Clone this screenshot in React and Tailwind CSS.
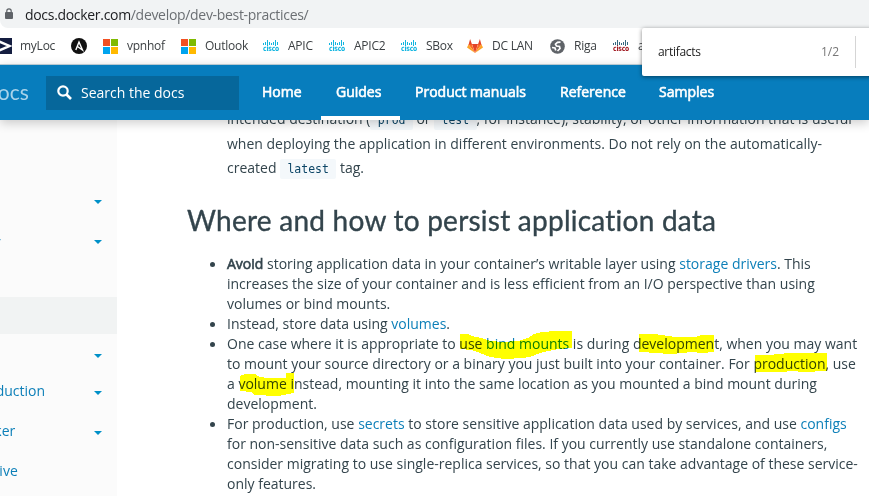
const Tile = () => (
  <svg className="h-[15px] w-[15px] shrink-0" viewBox="0 0 15 15" shapeRendering="crispEdges">
    <path fill="#f25022" d="M0 0h7v7H0z" />
    <path fill="#7fba00" d="M8 0h7v7H8z" />
    <path fill="#00a4ef" d="M0 8h7v7H0z" />
    <path fill="#ffb900" d="M8 8h7v7H8z" />
  </svg>
);

const Cisco = ({ bars = "#10b5e0", word = "#10b5e0" }) => (
  <svg className="h-4 w-4 shrink-0" viewBox="0 0 16 16">
    <path
      stroke={bars}
      strokeWidth="1"
      d="M.5 5v2M2.500 4v3M4.500 2v6M6.500 4v3M8.500 5v2M10.500 4v3M12.500 2v6M14.500 4v3"
    />
    <text x="0" y="13" textLength="16" lengthAdjust="spacingAndGlyphs" fontSize="7.5" fontWeight="700" fontFamily="DejaVu Sans, sans-serif" fill={word}>
      cisco
    </text>
  </svg>
);

const Gitlab = () => (
  <svg className="h-4 w-4 shrink-0" viewBox="0 0 16 16">
    <path fill="#e24329" d="M8 15 5 6h6zM1.500 7 3.100 1 5.200 7zM14.500 7 12.900 1 10.800 7z" />
    <path fill="#fc6d26" d="M8 15 5 6.500H1.500zM8 15l3-8.500h3.500z" />
    <path fill="#fca326" d="M8 15 1.500 6.500 0 9.500zM8 15l6.500-8.500L16 9.500z" />
  </svg>
);

const Globe = () => (
  <svg className="h-[15px] w-[15px] shrink-0" viewBox="0 0 15 15">
    <circle cx="7.500" cy="7.500" r="7.300" fill="#5f6368" />
    <path
      d="M10.500 3.200 7.500 3.400 5.500 5.200 6.500 7l3 .5.5 2-2.500 2.500M2 8.500l3 .5.8 2.500"
      fill="none"
      stroke="#fff"
      strokeWidth="1.700"
    />
  </svg>
);

const Caret = ({ className = "" }) => (
  <svg className={`h-1 w-2 shrink-0 ${className}`} viewBox="0 0 8 4">
    <path fill="#0090c8" d="M0 0h8L4 4z" />
  </svg>
);

const Label = ({ className = "", children }) => (
  <span className={`shrink-0 whitespace-nowrap ${className}`}>{children}</span>
);

const Line = ({ children }) => <span className="block whitespace-nowrap">{children}</span>;

const Item = ({ children }) => (
  <li className="relative before:absolute before:-left-[17px] before:top-[8px] before:h-[5px] before:w-[5px] before:rounded-full before:bg-[#33444c]">
    {children}
  </li>
);

const A = ({ children }) => <a className="text-[#0c7fb8]">{children}</a>;

const Code = ({ children }) => (
  <code className="rounded-[2px] bg-[#f4f8fb] px-[7.300px] py-[3px] font-['DejaVu_Sans_Mono',monospace] text-[11.500px] text-[#0b4566]">
    {children}
  </code>
);

function FindBar() {
  return (
    <div className="absolute left-[642px] top-[28px] flex h-12 w-[240px] items-center rounded-[2px] bg-white pl-4 text-[12px] shadow-[0_1px_4px_rgba(0,0,0,0.5)]">
      <Label className="w-[163px] tracking-[-0.3px] text-[#222]">artifacts</Label>
      <Label className="w-[34px] text-[#777]">1/2</Label>
      <div className="h-8 w-px bg-[#d5d5d5]" />
    </div>
  );
}

function Highlights() {
  return (
    <svg className="pointer-events-none absolute left-0 top-0 h-[496px] w-[869px] mix-blend-multiply" viewBox="0 0 869 496" shapeRendering="crispEdges">
      <g fill="#ff0">
        <path d="M460 334h8l4 2 9 2 10 3 12 1 15-1 10-3 6-4 8-2 14-1h16v17l-14 1-10 2-8 2-7 3-10 2-18 1-15-2-10-4-8-3-12-1z" />
        <path d="M639 334h16l20 3h20l6-2h13v17l-12 1-10-1-20 2-18-1-10-1h-5z" />
        <path d="M755 355h14l20-2h38v18l-24 1-10-1-12 1h-26z" />
        <path d="M240 376l5-2h10l5 3 8 1h18v-5h8v20l-16 3-24-1-3-3-11-1z" />
      </g>
    </svg>
  );
}

export default function App() {
  return (
    <div className="relative flex h-[496px] w-[869px] flex-col overflow-hidden bg-white font-['Open_Sans',sans-serif]">
      <div className="flex h-7 shrink-0 items-center rounded-bl-lg bg-[#f1f3f4] pl-[5px]">
        <svg className="h-3 w-2" viewBox="0 0 8 12">
          <rect y="4" width="8" height="7" rx="1" fill="#5f6368" />
          <path d="M1.800 5V3a2.200 2.200 0 0 1 4.400 0v2" fill="none" stroke="#5f6368" strokeWidth="1.200" />
        </svg>
        <Label className="ml-3 text-[14px] tracking-[-0.310px] text-[#6b6f73]">
          <span className="text-[#202124]">docs.docker.com</span>/develop/dev-best-practices/
        </Label>
      </div>

      <div className="flex h-9 shrink-0 items-center text-[12px] tracking-[-0.250px] text-[#3c4043]">
        <svg className="h-4 w-3 shrink-0" viewBox="0 0 12 16">
          <path fill="#141d40" d="M0 0h12v16H0z" />
          <path d="M-1 3.500 9.500 8-1 12.500" fill="none" stroke="#fff" strokeWidth="2.400" />
        </svg>
        <Label className="ml-2 w-[51px]">myLoc</Label>
        <svg className="h-4 w-4 shrink-0" viewBox="0 0 16 16">
          <circle cx="8" cy="8" r="8" fill="#111" />
          <path d="M4.800 12 8 4l3.500 8L6.500 8.500" fill="none" stroke="#fff" strokeWidth="1.400" />
        </svg>
        <div className="w-4 shrink-0" />
        <Tile />
        <Label className="ml-[9px] w-[54px]">vpnhof</Label>
        <Tile />
        <Label className="ml-[9px] w-[58px]">Outlook</Label>
        <Cisco />
        <Label className="ml-[9px] w-[41px]">APIC</Label>
        <Cisco />
        <Label className="ml-[9px] w-[47px]">APIC2</Label>
        <Cisco />
        <Label className="ml-[9px] w-[41px]">SBox</Label>
        <Gitlab />
        <Label className="ml-[9px] w-[58px]">DC LAN</Label>
        <Globe />
        <Label className="ml-[9px] w-[39px]">Riga</Label>
        <Cisco bars="#356880" word="#a01820" />
        <Label className="ml-[9px]">aci</Label>
      </div>

      <header className="relative z-10 flex h-14 shrink-0 items-center border-t border-[#b8c8d0] bg-[#077dbd] text-white shadow-[0_3px_10px_rgba(0,0,0,0.2)]">
        <Label className="-ml-[14px] -mt-[2px] w-[60px] font-['Lato',sans-serif] text-[21px] text-[#a9d3ea]">docs</Label>
        <div className="flex h-[34px] w-[193px] shrink-0 items-center bg-[#06679b] pl-[11px]">
          <svg className="h-[15px] w-[15px]" viewBox="0 0 15 15">
            <circle cx="6" cy="6" r="4.700" fill="none" stroke="#fff" strokeWidth="2.200" />
            <path d="M9.500 9.500l4.500 4.500" stroke="#fff" strokeWidth="2.600" />
          </svg>
          <Label className="ml-[9px] text-[14px]">Search the docs</Label>
        </div>
        <nav className="flex h-full text-[14px] leading-[54px] [-webkit-text-stroke:0.600px_white]">
          <Label className="ml-[23px] w-[59px]">Home</Label>
          <Label className="w-[79px] border-b-4 border-white pl-[15px]">Guides</Label>
          <Label className="ml-[15px] w-[145px]">Product manuals</Label>
          <Label className="w-[99px]">Reference</Label>
          <Label>Samples</Label>
        </nav>
      </header>

      <div className="flex h-[376px] shrink-0 overflow-hidden">
        <aside className="flex w-[117px] shrink-0 flex-col bg-[#fbfbfb] text-[14px] leading-5 text-[#0c7fb8]">
          <div className="mt-[72px] flex h-10 shrink-0 justify-end pr-[15px] pt-2">
            <Caret />
          </div>
          <div className="flex h-10 shrink-0 items-start justify-between pr-[15px]">
            <Label className="-ml-[5px]">r</Label>
            <Caret className="mt-2" />
          </div>
          <div className="mt-[25px] h-[37px] shrink-0 bg-[#f1f3f3]" />
          <div className="mt-[12px] flex h-[35px] shrink-0 justify-end pr-[15px] pt-2">
            <Caret />
          </div>
          <div className="flex h-10 shrink-0 items-start justify-between pr-[15px]">
            <Label className="-ml-[27px]">production</Label>
            <Caret className="mt-[10px]" />
          </div>
          <div className="flex h-10 shrink-0 items-start justify-between pr-[15px]">
            <Label className="-ml-[31px]">Docker</Label>
            <Caret className="mt-[10px]" />
          </div>
          <Label className="-ml-[22px]">native</Label>
        </aside>

        <main className="w-[752px] shrink-0 text-[14px] leading-5 text-[#33444c]">
          <p className="-mt-[13px] ml-[110px] leading-6">
            <Line>
              intended destination (<Code>prod</Code> or <Code>test</Code>, for instance), stability, or other information that is useful
            </Line>
            <Line>when deploying the application in different environments. Do not rely on the automatically-</Line>
            <Line>created <Code>latest</Code> tag.</Line>
          </p>
          <h2 className="ml-[70px] mt-[19px] h-10 whitespace-nowrap font-['Lato',sans-serif] text-[28px] leading-10 tracking-[0.240px] [-webkit-text-stroke:0.350px_#33444c] [font-variant-ligatures:none]">
            Where and how to persist application data
          </h2>
          <ul className="ml-[110px] mt-[14px]">
            <Item>
              <Line><b className="font-normal [-webkit-text-stroke:0.600px_#33444c]">Avoid</b> storing application data in your container’s writable layer using <A>storage drivers</A>. This</Line>
              <Line>increases the size of your container and is less efficient from an I/O perspective than using</Line>
              <Line>volumes or bind mounts.</Line>
            </Item>
            <Item>
              <Line>Instead, store data using <A>volumes</A>.</Line>
            </Item>
            <Item>
              <Line>One case where it is appropriate to use <A>bind mounts</A> is during development, when you may want</Line>
              <Line>to mount your source directory or a binary you just built into your container. For production, use</Line>
              <Line>a volume instead, mounting it into the same location as you mounted a bind mount during</Line>
              <Line>development.</Line>
            </Item>
            <Item>
              <Line>For production, use <A>secrets</A> to store sensitive application data used by services, and use <A>configs</A></Line>
              <Line>for non-sensitive data such as configuration files. If you currently use standalone containers,</Line>
              <Line>consider migrating to use single-replica services, so that you can take advantage of these service-</Line>
              <Line>only features.</Line>
            </Item>
          </ul>
        </main>
      </div>
      <Highlights />
      <div className="absolute inset-0 z-20">
        <FindBar />
      </div>
    </div>
  );
}
